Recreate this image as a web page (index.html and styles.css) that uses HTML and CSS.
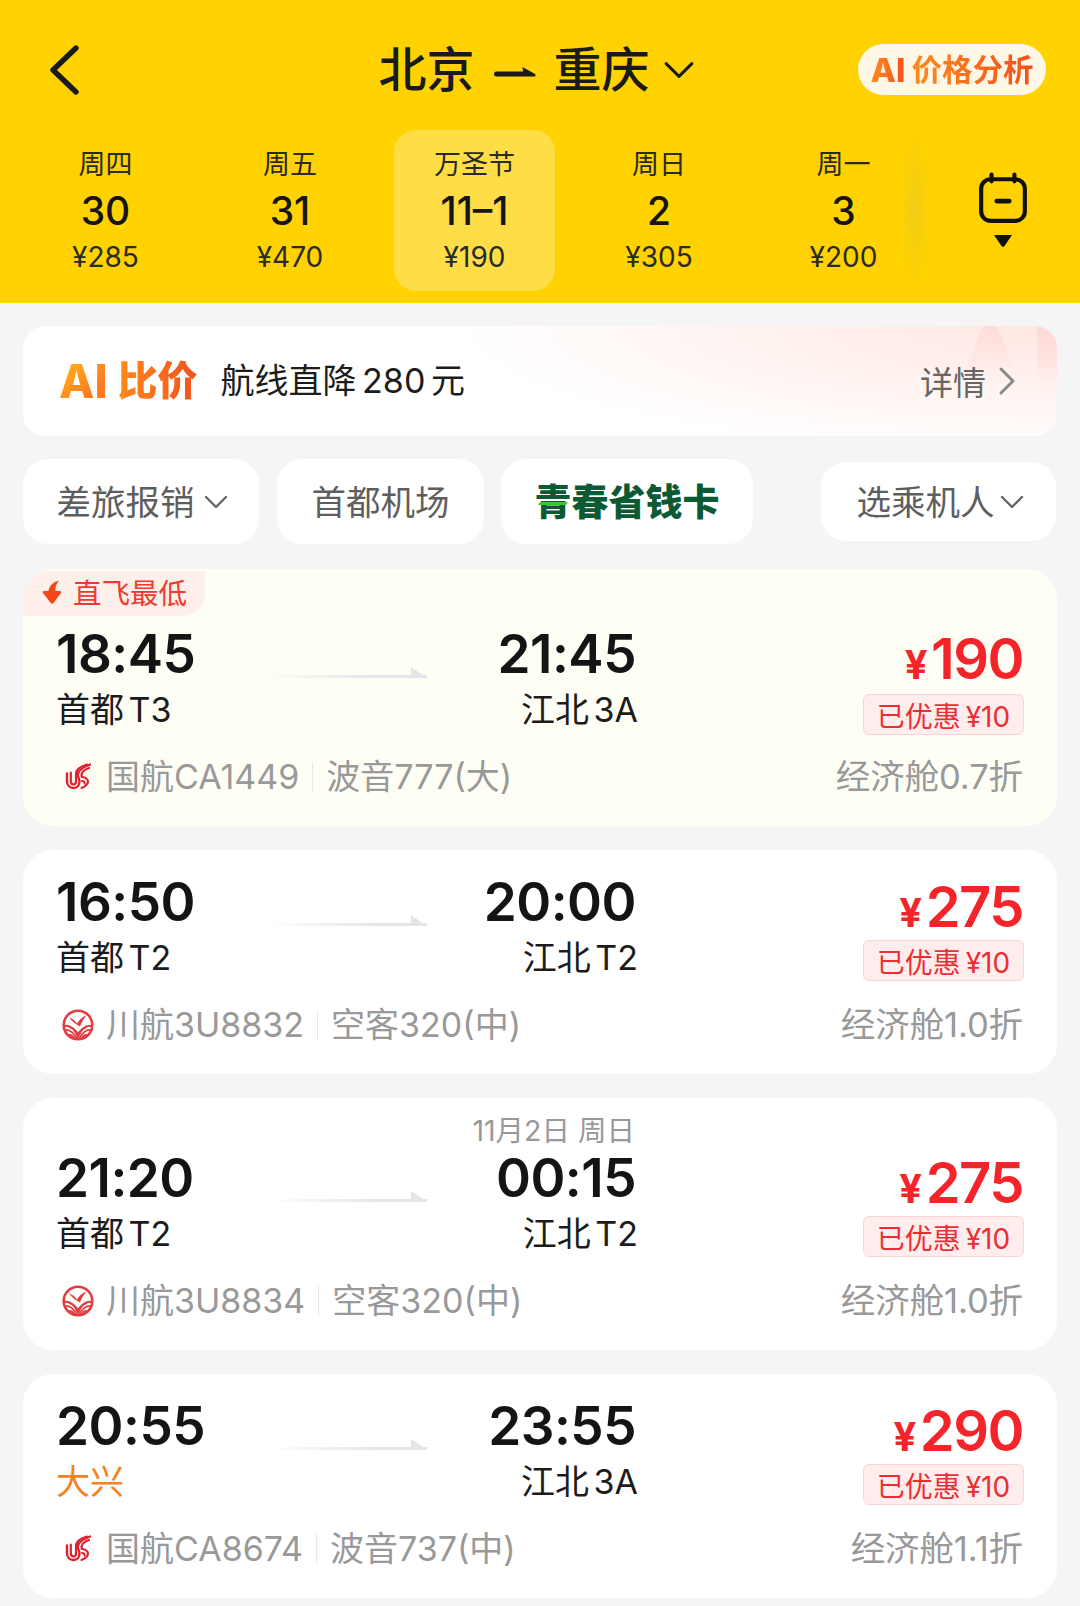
FILE: index.html
```html
<!DOCTYPE html>
<html lang="zh-CN">
<head>
<meta charset="utf-8">
<title>北京 — 重庆</title>
<link rel="stylesheet" href="styles.css">
</head>
<body>
<svg class="sprite" aria-hidden="true">
  <symbol id="chev-down" viewBox="0 0 24 14"><path d="M2 2l10 10L22 2" fill="none" stroke="currentColor" stroke-width="2.4" stroke-linecap="round" stroke-linejoin="round"/></symbol>
  <symbol id="airchina" viewBox="0 0 26 28"><g fill="none" stroke="#E0202E" stroke-linecap="round"><path stroke-width="2.4" d="M2 10.500V18C2 22.500 5 25 8.500 25C12.500 25 14.500 22 14.500 18.500C14.500 16 13 14.500 12.800 12C12.500 8 16 5 25 1.500"/><path stroke-width="2.200" d="M5.800 9.500V18C5.800 20.500 7 21.500 8.500 21.500C10 21.500 11 20 11 18.500V11C11 7 15 3.500 22 1.500"/><path stroke-width="2.200" d="M16.500 25C20 24 23 21 23 18.500C23 15.500 19 14 16.800 14C15.500 10 18 7 24 5"/><path stroke-width="2" d="M17 18C19 18 20 19 19.500 20.500"/></g></symbol>
  <symbol id="sichuan" viewBox="0 0 32 32"><circle cx="16" cy="16" r="14.300" fill="#fff" stroke="#E33B3F" stroke-width="2.600"/><path d="M7 8.500C10.500 9.500 13 11.500 15 14.500C17 11 20 8 24.500 6.500C21.500 10 19.500 13.500 18 17.500C14 15.500 10 12.500 7 8.500Z" fill="#E33B3F"/><g fill="none" stroke="#E33B3F" stroke-linecap="round"><path stroke-width="2" d="M3 17C8 16 12.500 20 16 27.500C19.500 20 24 16 29 17"/><path stroke-width="1.700" d="M3.800 21C8 20.500 11.500 24 15 29.500M28.200 21C24 20.500 20.500 24 17 29.500"/><path stroke-width="1.700" d="M7 26C9.500 25.500 11 27 12.500 29.500M25 26C22.500 25.500 21 27 19.500 29.500"/><path stroke-width="1.700" d="M8 18.500C11 19 14 21.500 16 25C18 21.500 21 19 24 18.500"/></g></symbol>
</svg>

<header class="topbar">
  <div class="nav">
    <svg class="back" viewBox="0 0 30 50"><path d="M27 3L4 25l23 22" fill="none" stroke="#1a1a1a" stroke-width="5.400" stroke-linecap="round" stroke-linejoin="round"/></svg>
    <h1 class="route">
      <span>北京</span>
      <svg class="route-dash" viewBox="0 0 42 14"><path d="M2.500 7.500H29L28.500 3L41 10C42 11 41.500 12.500 40 12.500H2.500A2.500 2.500 0 0 1 2.500 7.500Z" fill="#1a1a1a"/></svg>
      <span>重庆</span>
      <svg class="route-chev"><use href="#chev-down"/></svg>
    </h1>
    <div class="ai-pill"><span class="ai-pill-ai">AI</span><span class="ai-pill-text">价格分析</span></div>
  </div>
  <div class="dates">
    <div class="date"><span class="date-label">周四</span><strong class="date-num">30</strong><span class="date-price">¥285</span></div>
    <div class="date"><span class="date-label">周五</span><strong class="date-num">31</strong><span class="date-price">¥470</span></div>
    <div class="date date-active"><span class="date-label">万圣节</span><strong class="date-num">11–1</strong><span class="date-price">¥190</span></div>
    <div class="date"><span class="date-label">周日</span><strong class="date-num">2</strong><span class="date-price">¥305</span></div>
    <div class="date"><span class="date-label">周一</span><strong class="date-num">3</strong><span class="date-price">¥200</span></div>
    <div class="calendar">
      <svg class="calendar-icon" viewBox="0 0 50 50"><path d="M13 7H37a9 9 0 0 1 9 9V38a9 9 0 0 1-9 9H13a9 9 0 0 1-9-9V16a9 9 0 0 1 9-9Z" fill="none" stroke="#111" stroke-width="4"/><path d="M14 2.500V9M36 2.500V9" stroke="#111" stroke-width="4" stroke-linecap="round"/><path d="M19 28H31" stroke="#111" stroke-width="4.500" stroke-linecap="round"/></svg>
      <svg class="calendar-caret" viewBox="0 0 18 12"><path d="M0 0H18L10.500 11a2 2 0 0 1-3 0Z" fill="#111"/></svg>
    </div>
  </div>
</header>

<main class="content">
  <section class="ai-card">
    <div class="ai-brand"><span class="ai-brand-ai">AI</span><span class="ai-brand-text">比价</span></div>
    <p class="ai-msg">航线直降 280 元</p>
    <div class="ai-more">详情<svg class="ai-more-chev" viewBox="0 0 16 28"><path d="M2 2l12 12L2 26" fill="none" stroke="#8a8a8a" stroke-width="3" stroke-linecap="round" stroke-linejoin="round"/></svg></div>
  </section>

  <div class="filters">
    <div class="chip chip-a">差旅报销<svg class="chip-chev"><use href="#chev-down"/></svg></div>
    <div class="chip chip-b">首都机场</div>
    <div class="chip chip-c"><span class="card-brand">青春省钱卡</span></div>
    <div class="chip chip-d">选乘机人<svg class="chip-chev"><use href="#chev-down"/></svg></div>
  </div>

  <article class="flight flight-best">
    <div class="badge-low">
      <svg class="badge-low-icon" viewBox="0 0 24 26"><path d="M19 1.500C13 3 9 7 8.500 12H4C2.800 12 2.300 13 3 14L10.800 24C11.500 25 12.800 25 13.500 24L21 14C21.700 13 21.200 12 20 12H15.500C15 8 16.500 4.500 19 1.500Z" fill="#F4481C"/></svg>直飞最低
    </div>
    <div class="flight-grid">
      <div class="leg">
        <div class="time">18:45</div><div class="arrow"></div><div class="time time-end">21:45</div>
        <div class="port">首都 T3</div><div></div><div class="port port-end">江北 3A</div>
      </div>
      <div class="fare">
        <div class="price"><span class="yen">¥</span>190</div>
        <div class="saved">已优惠 ¥10</div>
      </div>
      <div class="carrier"><svg class="logo logo-ca"><use href="#airchina"/></svg><span>国航CA1449</span><i class="sep"></i><span>波音777(大)</span></div>
      <div class="cabin">经济舱0.7折</div>
    </div>
  </article>

  <article class="flight">
    <div class="flight-grid">
      <div class="leg">
        <div class="time">16:50</div><div class="arrow"></div><div class="time time-end">20:00</div>
        <div class="port">首都 T2</div><div></div><div class="port port-end">江北 T2</div>
      </div>
      <div class="fare">
        <div class="price"><span class="yen">¥</span>275</div>
        <div class="saved">已优惠 ¥10</div>
      </div>
      <div class="carrier"><svg class="logo"><use href="#sichuan"/></svg><span>川航3U8832</span><i class="sep"></i><span>空客320(中)</span></div>
      <div class="cabin">经济舱1.0折</div>
    </div>
  </article>

  <article class="flight flight-next">
    <div class="next-day">11月2日 周日</div>
    <div class="flight-grid">
      <div class="leg">
        <div class="time">21:20</div><div class="arrow"></div><div class="time time-end">00:15</div>
        <div class="port">首都 T2</div><div></div><div class="port port-end">江北 T2</div>
      </div>
      <div class="fare">
        <div class="price"><span class="yen">¥</span>275</div>
        <div class="saved">已优惠 ¥10</div>
      </div>
      <div class="carrier"><svg class="logo"><use href="#sichuan"/></svg><span>川航3U8834</span><i class="sep"></i><span>空客320(中)</span></div>
      <div class="cabin">经济舱1.0折</div>
    </div>
  </article>

  <article class="flight">
    <div class="flight-grid">
      <div class="leg">
        <div class="time">20:55</div><div class="arrow"></div><div class="time time-end">23:55</div>
        <div class="port port-alt">大兴</div><div></div><div class="port port-end">江北 3A</div>
      </div>
      <div class="fare">
        <div class="price"><span class="yen">¥</span>290</div>
        <div class="saved">已优惠 ¥10</div>
      </div>
      <div class="carrier"><svg class="logo logo-ca"><use href="#airchina"/></svg><span>国航CA8674</span><i class="sep"></i><span>波音737(中)</span></div>
      <div class="cabin">经济舱1.1折</div>
    </div>
  </article>
</main>
</body>
</html>
```
FILE: styles.css
```css
* { box-sizing: border-box; }
html, body { margin: 0; padding: 0; }
body {
  width: 1080px;
  height: 1606px;
  overflow: hidden;
  background: #F5F5F5;
  color: #151515;
  font-family: Inter, "Noto Sans CJK SC", sans-serif;
}
.sprite { display: none; }

/* header */
.topbar { height: 303px; background: #FFD200; padding-top: 44px; }
.nav {
  display: grid;
  grid-template-columns: 1fr auto 1fr;
  align-items: center;
  height: 51px;
  padding: 0 34px 0 49px;
}
.back { width: 30px; height: 50px; }
.route {
  display: flex;
  align-items: center;
  margin: 0 0 0 -22px;
  font-size: 48px;
  line-height: 51px;
  font-weight: 500;
  color: #1a1a1a;
}
.route-dash { width: 42px; height: 14px; margin: 3px 18px 0 19px; }
.route-chev { width: 32px; height: 18px; margin-left: 13px; color: #1a1a1a; }
.ai-pill {
  justify-self: end;
  display: flex;
  align-items: center;
  justify-content: center;
  gap: 6px;
  width: 188px;
  height: 51px;
  border-radius: 26px;
  background: #FFF8E6;
}
.ai-pill-ai, .ai-pill-text, .ai-brand-text {
  background: linear-gradient(90deg, #FF8A1E, #F4501E);
  -webkit-background-clip: text;
  background-clip: text;
  color: transparent;
}
.ai-pill-ai { font-size: 33px; line-height: 40px; font-weight: 800; }
.ai-pill-text { font-size: 30.500px; line-height: 40px; font-weight: 700; }

.dates {
  display: flex;
  gap: 23.5px;
  margin-top: 35px;
  padding-left: 25px;
}
.date {
  display: flex;
  flex-direction: column;
  align-items: center;
  width: 161px;
  height: 161px;
  padding-top: 17px;
  border-radius: 22px;
}
.date-active { background: #FFDD47; }
.date-label { font-size: 27px; line-height: 36px; color: #2a2a2a; }
.date-num { font-size: 39px; line-height: 50px; font-weight: 500; margin-top: 3px; }
.date-price { font-size: 28px; line-height: 36px; margin-top: 3px; color: #2a2a2a; }
.calendar {
  position: relative;
  display: flex;
  flex-direction: column;
  align-items: center;
  flex: none;
  width: 130px;
  margin-left: -47.500px;
  padding: 42px 0 0 76px;
}
.calendar::before {
  content: "";
  position: absolute;
  left: 0;
  top: 0;
  width: 30px;
  height: 100%;
  background: radial-gradient(ellipse 50% 50% at 50% 50%, rgba(222,195,60,.4), rgba(255,210,0,0));
}
.calendar-icon { flex: none; width: 52px; height: 52px; }
.calendar-caret { flex: none; width: 18px; height: 12px; margin-top: 11px; }

/* content */
.content { display: flex; flex-direction: column; padding: 23px 23px 0; }
.ai-card {
  position: relative;
  overflow: hidden;
  display: flex;
  align-items: center;
  height: 110px;
  padding: 0 42px 0 36px;
  border-radius: 22px;
  background: radial-gradient(ellipse 58% 115% at 100% 0, #FFE6E2 0, #FFF4F1 55%, #fff 100%);
}
.ai-card::before {
  content: "";
  position: absolute;
  top: 0;
  right: 42px;
  width: 50px;
  height: 44px;
  background: linear-gradient(rgba(255,215,210,.7), rgba(255,225,220,.1));
  clip-path: polygon(36% 0, 64% 0, 100% 100%, 0 100%);
}
.ai-card::after {
  content: "";
  position: absolute;
  top: 0;
  right: 0;
  width: 20px;
  height: 60px;
  background: linear-gradient(#FFD9D5, rgba(255,225,220,0));
}
.ai-brand { display: flex; align-items: center; gap: 10px; }
.ai-brand-ai {
  font-size: 46px;
  line-height: 50px;
  font-weight: 800;
  background: linear-gradient(135deg, #FFB81E 10%, #FF7A1E 70%);
  -webkit-background-clip: text;
  background-clip: text;
  color: transparent;
}
.ai-brand-text { font-size: 40px; line-height: 50px; font-weight: 900; }
.ai-msg { margin: 0 0 0 23px; font-size: 34px; line-height: 50px; color: #1c1c1c; word-spacing: -4px; }
.ai-more {
  position: relative;
  z-index: 1;
  display: flex;
  align-items: center;
  margin-left: auto;
  font-size: 33px;
  color: #666;
}
.ai-more-chev { width: 16px; height: 28px; margin-left: 13px; }

.filters { display: flex; align-items: center; height: 85px; margin-top: 23px; }
.chip {
  display: flex;
  align-items: center;
  justify-content: center;
  height: 85px;
  padding-bottom: 3px;
  border-radius: 25px;
  background: #fff;
  font-size: 34.500px;
  color: #5e5e5e;
}
.chip-a { width: 236px; padding-left: 2px; }
.chip-b { width: 207px; margin-left: 18px; }
.chip-c { width: 252px; margin-left: 17px; }
.chip-d { width: 235px; height: 79px; margin-left: 68px; padding-left: 3px; }
.chip-chev { width: 24px; height: 14px; margin: 3px 0 0 9px; color: #666; }
.chip-d .chip-chev { margin-left: 5px; }
.card-brand { position: relative; font-size: 37px; font-weight: 900; color: #0C5A34; }
.card-brand::after {
  content: "";
  position: absolute;
  left: 4px;
  top: 29px;
  width: 28px;
  height: 3px;
  background: #3CC82B;
  transform: skewX(-30deg);
}

/* flights */
.flight {
  position: relative;
  overflow: hidden;
  margin-top: 24px;
  padding: 22px 33px 23px;
  border-radius: 30px;
  background: #fff;
}
.filters + .flight { margin-top: 25px; }
.flight-best { padding-top: 55px; background: #FFFEF5; }
.flight-next { padding-top: 16px; }
.badge-low {
  position: absolute;
  top: 2px;
  left: 0;
  display: flex;
  align-items: center;
  width: 182px;
  height: 45px;
  padding: 0 0 4px 17px;
  border-radius: 0 0 22px 0;
  background: #FFEFEA;
  font-size: 28.500px;
  color: #F03A30;
}
.badge-low-icon { width: 24px; height: 26px; margin-right: 9px; }
.next-day {
  width: 579px;
  height: 34px;
  font-size: 28.500px;
  line-height: 34px;
  color: #999;
  text-align: right;
}
.flight-grid {
  display: grid;
  grid-template-columns: 581px 1fr;
  row-gap: 15px;
}
.leg {
  display: grid;
  grid-template-columns: 210px 161px 1fr;
  grid-template-rows: 60px 52px;
  align-items: center;
}
.time {
  font-size: 53px;
  line-height: 60px;
  font-weight: 600;
  color: #141414;
  letter-spacing: -.5px;
}
.time-end { text-align: right; margin-right: 1px; }
.arrow {
  position: relative;
  align-self: end;
  height: 3px;
  margin-bottom: 6px;
  background: linear-gradient(90deg, rgba(225,226,230,0), #E4E5E8 70%);
}
.arrow::after {
  content: "";
  position: absolute;
  right: 0;
  bottom: 0;
  width: 16px;
  height: 11px;
  background: #E4E5E8;
  clip-path: polygon(0 0, 100% 100%, 0 100%);
}
.port { font-size: 34px; line-height: 52px; color: #1c1c1c; word-spacing: -5px; }
.port-end { text-align: right; margin-right: -1px; }
.port-alt { color: #F58220; }
.fare { display: flex; flex-direction: column; align-items: flex-end; }
.price {
  height: 68px;
  margin-right: 1px;
  font-size: 56px;
  line-height: 70px;
  font-weight: 600;
  color: #F5242A;
  letter-spacing: -1.5px;
}
.flight-best .price { height: 70px; }
.yen { font-size: 40px; line-height: 40px; font-weight: 700; margin-right: 5px; }
.saved {
  display: flex;
  align-items: center;
  justify-content: center;
  width: 161px;
  height: 41px;
  border: 1px solid #FBD3D3;
  border-radius: 6px;
  background: #FFEDED;
  font-size: 28px;
  color: #EC2E33;
  word-spacing: -3px;
}
.carrier {
  display: flex;
  align-items: center;
  height: 52px;
  font-size: 34px;
  line-height: 52px;
  color: #999;
}
.logo { width: 32px; height: 32px; margin: 0 12px 0 6px; flex: none; }
.logo-ca { width: 26px; height: 28px; margin: 0 15px 0 9px; }
.sep { width: 1px; height: 30px; margin: 0 13px; background: #E8E8E8; }
.cabin { margin-right: 1px; font-size: 34.500px; line-height: 52px; color: #999; text-align: right; letter-spacing: -.1px; }
```
